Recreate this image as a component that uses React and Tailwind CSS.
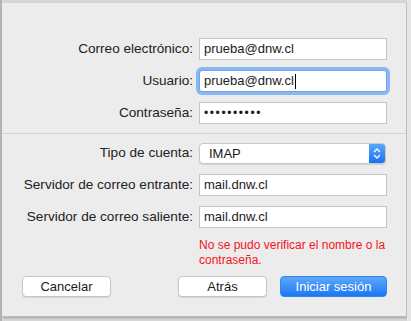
function Field({ label, children, className = '' }) {
  return (
    <div className={`flex items-center ${className}`}>
      <label className="w-[197px] shrink-0 pr-[6px] text-right text-[13.6px] text-[#222]">{label}</label>
      {children}
    </div>
  )
}

function TextBox({ value, focused }) {
  return (
    <div
      className={`flex h-[22px] w-[188px] items-center border bg-white pl-[4px] text-[13px] text-[#1a1a1a] ${
        focused ? 'rounded-[3px] border-[#6ea3ee] ring-[3px] ring-[#8bb8f3]' : 'border-[#c4c4c4]'
      }`}
    >
      {value}
      {focused && <span className="ml-[1px] h-[15px] w-px bg-black" />}
    </div>
  )
}

export default function App() {
  return (
    <div className="h-[321px] w-[411px] overflow-hidden bg-[#d6d6d6] font-['Liberation_Sans',Arial,sans-serif]">
      <div className="flex h-full">
        <div className="w-[2px] shrink-0 bg-[#b4b4b4]" />
        <div className="mt-[3px] flex h-[314px] w-[405px] shrink-0 flex-col border-r border-b border-[#bdbdbd] bg-[#ececec] shadow-[1px_1px_2px_rgba(0,0,0,0.25)]">
          <div className="mt-[35px] flex flex-col gap-[10px]">
            <Field label="Correo electrónico:">
              <TextBox value="prueba@dnw.cl" />
            </Field>
            <Field label="Usuario:">
              <TextBox value="prueba@dnw.cl" focused />
            </Field>
            <Field label="Contraseña:">
              <TextBox value={<span className="tracking-[1.6px] text-[12px]">••••••••••</span>} />
            </Field>
          </div>

          <div className="mt-[9px] h-px w-full bg-[#d4d4d4]" />

          <div className="mt-[9px] flex flex-col gap-[10px]">
            <Field label="Tipo de cuenta:">
              <div className="flex h-[21px] w-[187px] items-stretch overflow-hidden rounded-[4px] border border-[#c9c9c9] bg-white shadow-[0_1px_1px_rgba(0,0,0,0.12)]">
                <span className="flex flex-1 items-center pl-[9px] text-[13px] text-[#1a1a1a]">IMAP</span>
                <span className="flex w-[16px] items-center justify-center bg-gradient-to-b from-[#5aa6fb] to-[#1571f2]">
                  <svg width="8" height="13" viewBox="0 0 8 13" fill="none" stroke="white" strokeWidth="1.4" strokeLinecap="round" strokeLinejoin="round">
                    <path d="M1.5 4.5 L4 2 L6.5 4.5" />
                    <path d="M1.5 8.5 L4 11 L6.5 8.5" />
                  </svg>
                </span>
              </div>
            </Field>
            <Field label="Servidor de correo entrante:">
              <TextBox value="mail.dnw.cl" />
            </Field>
            <Field label="Servidor de correo saliente:">
              <TextBox value="mail.dnw.cl" />
            </Field>
          </div>

          <p className="ml-[197px] mt-[10px] w-[190px] text-[12px] leading-[15px] text-[#f5141e]">
            No se pudo verificar el nombre o la contraseña.
          </p>

          <div className="mt-[8px] flex items-center">
            <button className="ml-[20px] h-[21px] w-[89px] rounded-[4px] border border-[#c6c6c6] bg-white text-[13px] text-[#1a1a1a] shadow-[0_1px_1px_rgba(0,0,0,0.1)]">
              Cancelar
            </button>
            <button className="ml-[67px] h-[21px] w-[89px] rounded-[4px] border border-[#c6c6c6] bg-white text-[13px] text-[#1a1a1a] shadow-[0_1px_1px_rgba(0,0,0,0.1)]">
              Atrás
            </button>
            <button className="ml-[13px] h-[21px] w-[107px] rounded-[4px] border border-[#2f86f3] bg-gradient-to-b from-[#5ba7f9] to-[#1877f3] text-[13px] text-white">
              Iniciar sesión
            </button>
          </div>
        </div>
        <div className="flex-1 bg-[#e6e6e6]" />
      </div>
    </div>
  )
}
